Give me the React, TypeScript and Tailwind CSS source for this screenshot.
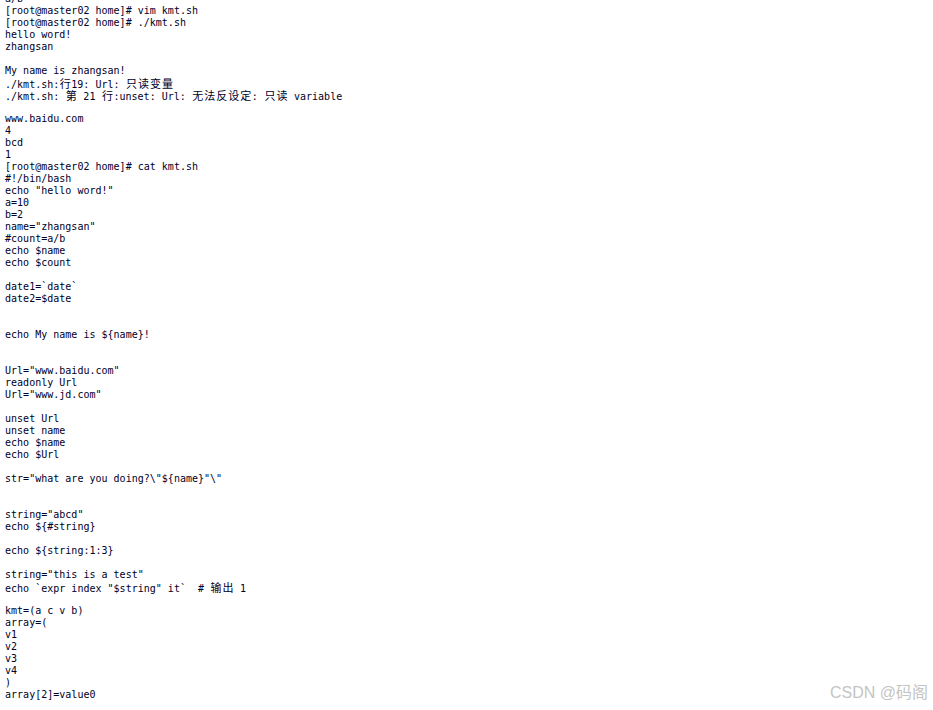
const lines: string[] = [
  "a/b",
  "[root@master02 home]# vim kmt.sh",
  "[root@master02 home]# ./kmt.sh",
  "hello word!",
  "zhangsan",
  "",
  "My name is zhangsan!",
  "./kmt.sh:行19: Url: 只读变量",
  "./kmt.sh: 第 21 行:unset: Url: 无法反设定: 只读 variable",
  "",
  "www.baidu.com",
  "4",
  "bcd",
  "1",
  "[root@master02 home]# cat kmt.sh",
  "#!/bin/bash",
  'echo "hello word!"',
  "a=10",
  "b=2",
  'name="zhangsan"',
  "#count=a/b",
  "echo $name",
  "echo $count",
  "",
  "date1=`date`",
  "date2=$date",
  "",
  "",
  "echo My name is ${name}!",
  "",
  "",
  'Url="www.baidu.com"',
  "readonly Url",
  'Url="www.jd.com"',
  "",
  "unset Url",
  "unset name",
  "echo $name",
  "echo $Url",
  "",
  'str="what are you doing?\\"${name}"\\"',
  "",
  "",
  'string="abcd"',
  "echo ${#string}",
  "",
  "echo ${string:1:3}",
  "",
  'string="this is a test"',
  'echo `expr index "$string" it`  # 输出 1',
  "",
  "kmt=(a c v b)",
  "array=(",
  "v1",
  "v2",
  "v3",
  "v4",
  ")",
  "array[2]=value0",
];

// CJK glyphs take two terminal cells
function Line({ text }: { text: string }) {
  const parts = Array.from(text).map((ch, i) =>
    /[\u3000-\u9fff\uff00-\uffef]/.test(ch) ? (
      <span
        key={i}
        className="inline-block w-[12px] text-center text-[11px] font-['Noto_Sans_CJK_SC',sans-serif]"
      >
        {ch}
      </span>
    ) : (
      ch
    )
  );
  return <div className="h-[12px] leading-[12px] whitespace-pre">{parts}</div>;
}

export default function App() {
  return (
    <div className="relative w-[933px] h-[710px] overflow-hidden bg-white">
      <div className="-mt-[7px] pl-[5px] text-[10px] text-[#000028] font-['DejaVu_Sans_Mono','Liberation_Mono',monospace]">
        {lines.map((l, i) => (
          <Line key={i} text={l} />
        ))}
      </div>
      <div className="absolute right-[5px] top-[682px] text-[16px] leading-[22px] text-[#c4c4c4] font-['Liberation_Sans','Noto_Sans_CJK_SC',sans-serif]">
        CSDN @码阁
      </div>
    </div>
  );
}
